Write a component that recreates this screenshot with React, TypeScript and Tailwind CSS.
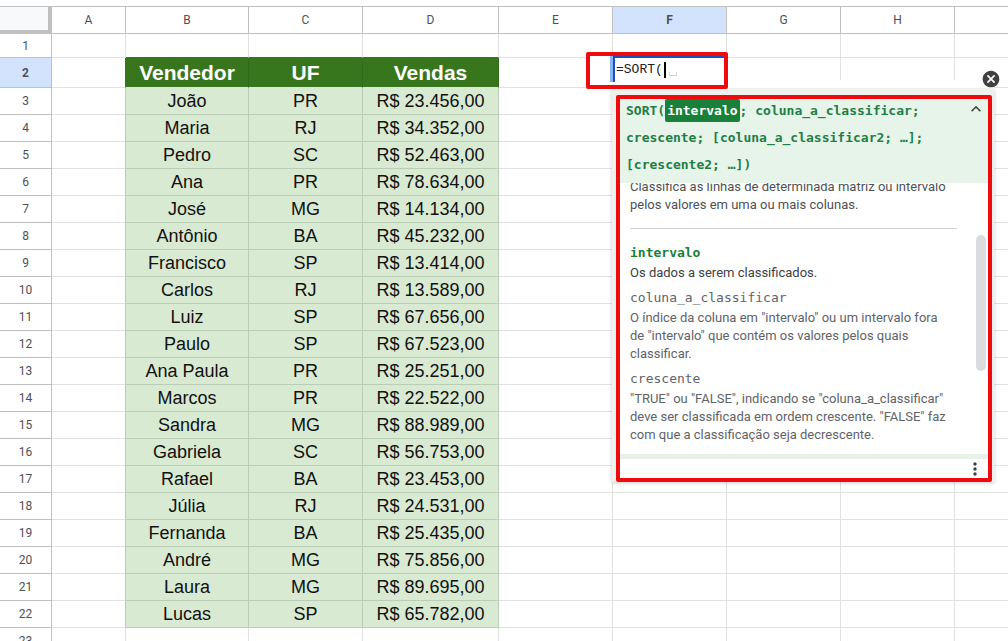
import { MdCancel, MdExpandLess, MdMoreVert } from 'react-icons/md';

interface ISale {
  seller: string;
  state: string;
  amount: string;
}

interface IArgument {
  name: string;
  description?: string;
  active?: boolean;
}

const COLUMNS = [
  { label: 'A', width: 'w-[74px]' },
  { label: 'B', width: 'w-[123px]' },
  { label: 'C', width: 'w-[114px]' },
  { label: 'D', width: 'w-[136px]' },
  { label: 'E', width: 'w-[114px]' },
  { label: 'F', width: 'w-[114px]' },
  { label: 'G', width: 'w-[114px]' },
  { label: 'H', width: 'w-[114px]' },
  { label: '', width: '' },
];

const SALES: ISale[] = [
  { seller: 'João', state: 'PR', amount: 'R$ 23.456,00' },
  { seller: 'Maria', state: 'RJ', amount: 'R$ 34.352,00' },
  { seller: 'Pedro', state: 'SC', amount: 'R$ 52.463,00' },
  { seller: 'Ana', state: 'PR', amount: 'R$ 78.634,00' },
  { seller: 'José', state: 'MG', amount: 'R$ 14.134,00' },
  { seller: 'Antônio', state: 'BA', amount: 'R$ 45.232,00' },
  { seller: 'Francisco', state: 'SP', amount: 'R$ 13.414,00' },
  { seller: 'Carlos', state: 'RJ', amount: 'R$ 13.589,00' },
  { seller: 'Luiz', state: 'SP', amount: 'R$ 67.656,00' },
  { seller: 'Paulo', state: 'SP', amount: 'R$ 67.523,00' },
  { seller: 'Ana Paula', state: 'PR', amount: 'R$ 25.251,00' },
  { seller: 'Marcos', state: 'PR', amount: 'R$ 22.522,00' },
  { seller: 'Sandra', state: 'MG', amount: 'R$ 88.989,00' },
  { seller: 'Gabriela', state: 'SC', amount: 'R$ 56.753,00' },
  { seller: 'Rafael', state: 'BA', amount: 'R$ 23.453,00' },
  { seller: 'Júlia', state: 'RJ', amount: 'R$ 24.531,00' },
  { seller: 'Fernanda', state: 'BA', amount: 'R$ 25.435,00' },
  { seller: 'André', state: 'MG', amount: 'R$ 75.856,00' },
  { seller: 'Laura', state: 'MG', amount: 'R$ 89.695,00' },
  { seller: 'Lucas', state: 'SP', amount: 'R$ 65.782,00' },
];

const ARGUMENTS: IArgument[] = [
  {
    name: 'intervalo',
    description: 'Os dados a serem classificados.',
    active: true,
  },
  {
    name: 'coluna_a_classificar',
    description:
      'O índice da coluna em "intervalo" ou um intervalo fora de "intervalo" que contém os valores pelos quais classificar.',
  },
  {
    name: 'crescente',
    description:
      '"TRUE" ou "FALSE", indicando se "coluna_a_classificar" deve ser classificada em ordem crescente. "FALSE" faz com que a classificação seja decrescente.',
  },
  { name: 'coluna_a_classificar2; … [opcional]' },
];

const CELL = 'border-r border-b border-[#e1e1e1] p-0 last:border-r-0';
const HEAD_CELL =
  'border-r border-b border-[#c0c0c0] p-0 text-center text-xs text-[#4d5156] last:border-r-0';
const TITLE_CELL =
  'border-r border-b border-r-[#316a19] border-b-[#d9ead3] bg-[#38761d] p-0 text-center text-[21px] leading-6 font-bold text-white';
const DATA_CELL =
  'border-r border-b border-[#bccdb7] bg-[#d9ead3] p-0 text-center text-[18px] leading-6 text-[#111]';

function RowNumber({ value, active }: { value: number; active?: boolean }) {
  return (
    <th
      scope="row"
      className={`${HEAD_CELL} ${active ? 'bg-[#d3e3fd] font-bold text-[#0b2a5c]' : 'font-normal'}`}
    >
      {value}
    </th>
  );
}

function EmptyCells({ count }: { count: number }) {
  return Array.from({ length: count }, (_, i) => <td key={i} className={CELL} />);
}

function Sheet() {
  return (
    <table className="w-full table-fixed border-separate border-spacing-0 border-t border-[#c0c0c0]">
      <thead className="font-[Roboto,sans-serif]">
        <tr className="h-[27px]">
          <th className="h-[27px] w-[52px] border-r-4 border-b-4 border-[#c0c0c0] bg-[#f8f9fa] p-0" />
          {COLUMNS.map(({ label, width }) => (
            <th
              key={label}
              scope="col"
              className={`${HEAD_CELL} ${width} ${label === 'F' ? 'bg-[#d3e3fd] font-bold text-[#0b2a5c]' : 'font-normal'}`}
            >
              {label}
            </th>
          ))}
        </tr>
      </thead>
      <tbody className="[&_th]:font-[Roboto,sans-serif]">
        <tr className="h-6">
          <RowNumber value={1} />
          <EmptyCells count={1} />
          {[1, 2, 3].map((i) => (
            <td key={i} className="border-r border-b border-r-[#e1e1e1] border-b-[#38761d] p-0" />
          ))}
          <EmptyCells count={5} />
        </tr>
        <tr className="h-[30px]">
          <RowNumber value={2} active />
          <td className="border-r border-b border-r-[#38761d] border-b-[#e1e1e1] p-0" />
          <td className={TITLE_CELL}>Vendedor</td>
          <td className={TITLE_CELL}>UF</td>
          <td className={TITLE_CELL}>Vendas</td>
          <EmptyCells count={5} />
        </tr>
        {SALES.map((sale, i) => (
          <tr key={sale.seller} className="h-[27px]">
            <RowNumber value={i + 3} />
            <td className="border-r border-b border-r-[#bccdb7] border-b-[#e1e1e1] p-0" />
            <td className={DATA_CELL}>{sale.seller}</td>
            <td className={DATA_CELL}>{sale.state}</td>
            <td className={DATA_CELL}>{sale.amount}</td>
            <EmptyCells count={5} />
          </tr>
        ))}
        <tr className="h-[27px]">
          <RowNumber value={23} />
          <EmptyCells count={9} />
        </tr>
      </tbody>
    </table>
  );
}

function FormulaCell() {
  return (
    <div className="absolute top-[52px] left-[586px] flex h-[37px] w-[142px] rounded-xs border-4 border-[#ee0a0d] bg-white pl-5">
      <div className="h-[26px] w-[3px] bg-[#8ab4f8]" />
      <div className="flex h-[26px] flex-1 items-center border-t-2 border-l-2 border-[#1f4fb5] pl-px">
        <input
          aria-label="Fórmula"
          defaultValue="=SORT("
          className="w-[50px] border-r-2 border-black font-['Liberation_Mono',monospace] text-[13px] leading-4 text-[#222] outline-none"
        />
        <span className="mt-2 ml-[3px] h-1 w-2 border border-t-0 border-gray-300" />
      </div>
    </div>
  );
}

function Argument({ name, description, active }: IArgument) {
  return (
    <div className="mb-[7px]">
      <dt
        className={`mb-0.5 font-['DejaVu_Sans_Mono',monospace] text-[13px] whitespace-nowrap ${active ? 'font-bold text-[#188038]' : 'text-[#5f6368]'}`}
      >
        {name}
      </dt>
      {description && (
        <dd className={active ? 'text-[#3c4043]' : 'text-[#5f6368]'}>{description}</dd>
      )}
    </div>
  );
}

function FormulaHelp() {
  return (
    <div className="absolute top-[88px] left-[612px] w-[382px] bg-[#edf2ec] pt-[7px] pr-0.5 pl-1 shadow-[0_-8px_0_white,0_1px_4px_rgba(0,0,0,0.2)]">
      <section className="rounded-xs border-4 border-[#ee0a0d] bg-white font-[Roboto,sans-serif]">
        <header className="flex h-[84px] items-start justify-between bg-[#e6f4ea] pr-0.5 pl-1.5">
          <p className="-mt-0.5 font-['DejaVu_Sans_Mono',monospace] text-[13px] leading-[27px] font-bold text-[#1e7e45]">
            SORT(
            <mark className="rounded-xs bg-[#188038] px-0.5 py-1 text-white">intervalo</mark>;
            coluna_a_classificar;
            <br />
            crescente; [coluna_a_classificar2; …];
            <br />
            [crescente2; …])
          </p>
          <button type="button" aria-label="Recolher" className="text-[#444746]">
            <MdExpandLess size={20} />
          </button>
        </header>
        <div className="flex h-[271px] justify-between overflow-hidden pr-0.5 pl-2.5">
          <div className="-mt-[5px] w-[327px] text-[13px] leading-[18px] text-[#4d5156]">
            <p>
              Classifica as linhas de determinada matriz ou intervalo pelos valores em uma ou
              mais colunas.
            </p>
            <hr className="mt-3.5 mb-[15px] border-[#d0d3d6]" />
            <dl className="pr-1.5">
              {ARGUMENTS.map((argument) => (
                <Argument key={argument.name} {...argument} />
              ))}
            </dl>
          </div>
          <div className="mt-[52px] h-[136px] w-2.5 rounded-full bg-[#dadce0]" />
        </div>
        <footer className="flex h-6 justify-end overflow-hidden border-t-5 border-[#e6f1e9] pr-[3px]">
          <button type="button" aria-label="Mais opções" className="text-[#3c4043]">
            <MdMoreVert size={20} />
          </button>
        </footer>
      </section>
      <button
        type="button"
        aria-label="Fechar"
        className="absolute -top-[19px] -right-[7px] text-[#404040]"
      >
        <MdCancel size={20} />
      </button>
    </div>
  );
}

export default function App() {
  return (
    <main className="relative h-screen overflow-hidden bg-white pt-1.5 font-['Liberation_Sans',Arial,sans-serif]">
      <Sheet />
      <FormulaHelp />
      <FormulaCell />
    </main>
  );
}
